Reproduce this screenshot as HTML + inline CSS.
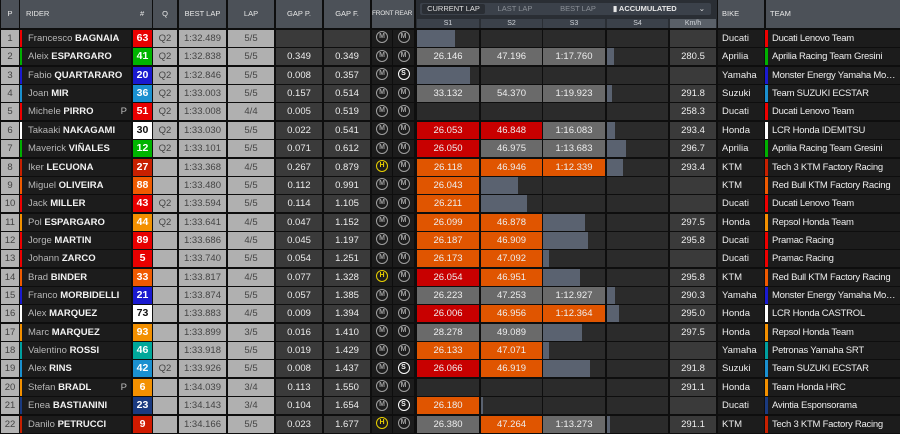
<!DOCTYPE html>
<html><head><meta charset="utf-8"><style>
*{margin:0;padding:0;box-sizing:border-box}
body{width:900px;height:433px;background:#0e0e0e;font-family:"Liberation Sans",sans-serif;overflow:hidden;position:relative}
.h{position:absolute;top:0;height:28px;background:#4c5158;color:#e8e8e8;font-size:7.5px;line-height:28px;text-align:center;white-space:nowrap}
.sh{position:absolute;top:19px;height:9px;background:#3b414a;color:#cfd3d8;font-size:7px;line-height:9px;text-align:center}
#rows{position:absolute;top:30px;left:0;width:900px}
.r{position:relative;height:17px;margin-bottom:1.36px}
.c{position:absolute;top:0;height:17px;line-height:17px;font-style:normal;text-align:center;font-size:9.5px;overflow:hidden;white-space:nowrap}
.p{left:1px;width:18px;background:#b3b3b3;color:#444}
.rd{left:20px;width:111px;background:#1c1c1c;color:#b8b8b8;text-align:left;padding-left:6px;border-left:2px solid #888}
.rd b{color:#f2f2f2}
.rd em{position:absolute;right:4px;top:0;font-style:normal;color:#bbb}
.n{left:133px;width:19px;color:#fff;font-weight:bold;font-size:10.5px}
.q{left:153px;width:24px;background:#b0b0b0;color:#444}
.bl{left:179px;width:47px;background:#b0b0b0;color:#444}
.lp{left:228px;width:46px;background:#b0b0b0;color:#444}
.gp{left:276px;width:46px;background:#3a3a3a;color:#eee}
.gf{left:324px;width:46px;background:#3a3a3a;color:#eee}
.fr{left:372px;width:20px;background:#1c1c1c}
.re{left:393px;width:21px;background:#1c1c1c}
.t{display:inline-block;width:12px;height:12px;border:1.3px solid #a0a0a0;border-radius:50%;color:#a0a0a0;font-size:7px;line-height:10px;text-align:center;font-weight:bold;vertical-align:middle;margin-top:-2px;text-decoration:none}
.t.s{border-color:#fff;color:#fff}
.t.hd{border-color:#e8d000;color:#e8d000}
.s1,.s2,.s3,.s4{background:#2b2b2b;color:#eee}
.s1{left:417px;width:62px}.s2{left:481px;width:61px}.s3{left:543px;width:62px}.s4{left:607px;width:61px}
.f{position:absolute;left:0;top:0;height:17px;width:100%;font-weight:normal}
.g{background:#6a6a6a}.x{background:#c80000}.o{background:#e05500}
.bar{position:absolute;left:0;top:0;height:17px;background:#5a6270}
.km{left:670px;width:46px;background:#3a3a3a;color:#eee}
.bk{left:718px;width:46px;background:#1c1c1c;color:#eee;text-align:left;padding-left:4px}
.tm{left:765px;width:135px;background:#1c1c1c;color:#eee;text-align:left;padding-left:4px;padding-right:3px;border-left:3px solid #888;text-overflow:ellipsis;letter-spacing:-0.25px}
</style></head><body>
<div class="h" style="left:1px;width:18px">P</div>
<div class="h" style="left:20px;width:132px;text-align:left;padding-left:6px">RIDER<span style="position:absolute;left:120px">#</span></div>
<div class="h" style="left:153px;width:24px">Q</div>
<div class="h" style="left:179px;width:47px">BEST LAP</div>
<div class="h" style="left:228px;width:46px">LAP</div>
<div class="h" style="left:276px;width:46px">GAP P.</div>
<div class="h" style="left:324px;width:46px">GAP F.</div>
<div class="h" style="left:372px;width:42px;font-size:6.5px;text-align:left;padding-left:0;letter-spacing:-0.2px">FRONT REAR</div>
<div class="h" style="left:416px;width:301px;background:#2a2e34"></div>
<div style="position:absolute;left:420px;top:3px;width:200px;height:12px;background:#3b414a;border-radius:2px"></div>
<div style="position:absolute;left:422px;top:4px;width:63px;height:10px;background:#2a2e34;border-radius:2px;color:#e0e0e0;font-size:7.5px;line-height:10px;text-align:center">CURRENT LAP</div>
<div style="position:absolute;left:490px;top:4px;width:50px;height:10px;color:#8a8f96;font-size:7.5px;line-height:10px;text-align:center">LAST LAP</div>
<div style="position:absolute;left:548px;top:4px;width:60px;height:10px;color:#8a8f96;font-size:7.5px;line-height:10px;text-align:center">BEST LAP</div>
<div style="position:absolute;left:607px;top:3px;width:104px;height:12px;background:#3b414a;border-radius:2px;color:#e8e8e8;font-size:7.5px;line-height:12px;padding-left:6px;font-weight:bold">▮ ACCUMULATED<span style="position:absolute;right:6px;font-weight:normal">⌄</span></div>
<div class="sh" style="left:417px;width:62px">S1</div>
<div class="sh" style="left:481px;width:61px">S2</div>
<div class="sh" style="left:543px;width:62px">S3</div>
<div class="sh" style="left:607px;width:61px">S4</div>
<div class="sh" style="left:670px;width:46px;background:#5a6068">Km/h</div>
<div class="h" style="left:718px;width:46px;text-align:left;padding-left:4px">BIKE</div>
<div class="h" style="left:766px;width:134px;text-align:left;padding-left:4px">TEAM</div>

<div id="rows">
<div class="r"><i class="c p">1</i><i class="c rd" style="border-color:#e00">Francesco <b>BAGNAIA</b></i><i class="c n" style="background:#e80000">63</i><i class="c q">Q2</i><i class="c bl">1:32.489</i><i class="c lp">5/5</i><i class="c gp"></i><i class="c gf"></i><i class="c fr"><u class="t">M</u></i><i class="c re"><u class="t">M</u></i><i class="c s1"><b class="bar" style="width:38px"></b></i><i class="c s2"></i><i class="c s3"></i><i class="c s4"></i><i class="c km"></i><i class="c bk">Ducati</i><i class="c tm" style="border-color:#e00">Ducati Lenovo Team</i></div>
<div class="r"><i class="c p">2</i><i class="c rd" style="border-color:#00b000">Aleix <b>ESPARGARO</b></i><i class="c n" style="background:#00b400">41</i><i class="c q">Q2</i><i class="c bl">1:32.838</i><i class="c lp">5/5</i><i class="c gp">0.349</i><i class="c gf">0.349</i><i class="c fr"><u class="t">M</u></i><i class="c re"><u class="t">M</u></i><i class="c s1"><b class="f g">26.146</b></i><i class="c s2"><b class="f g">47.196</b></i><i class="c s3"><b class="f g">1:17.760</b></i><i class="c s4"><b class="bar" style="width:7px"></b></i><i class="c km">280.5</i><i class="c bk">Aprilia</i><i class="c tm" style="border-color:#00b000">Aprilia Racing Team Gresini</i></div>
<div class="r"><i class="c p">3</i><i class="c rd" style="border-color:#1a1ad0">Fabio <b>QUARTARARO</b></i><i class="c n" style="background:#1a1ad0">20</i><i class="c q">Q2</i><i class="c bl">1:32.846</i><i class="c lp">5/5</i><i class="c gp">0.008</i><i class="c gf">0.357</i><i class="c fr"><u class="t">M</u></i><i class="c re"><u class="t s">S</u></i><i class="c s1"><b class="bar" style="width:53px"></b></i><i class="c s2"></i><i class="c s3"></i><i class="c s4"></i><i class="c km"></i><i class="c bk">Yamaha</i><i class="c tm" style="border-color:#1a1ad0">Monster Energy Yamaha MotoGP</i></div>
<div class="r"><i class="c p">4</i><i class="c rd" style="border-color:#1a90d0">Joan <b>MIR</b></i><i class="c n" style="background:#1a90d0">36</i><i class="c q">Q2</i><i class="c bl">1:33.003</i><i class="c lp">5/5</i><i class="c gp">0.157</i><i class="c gf">0.514</i><i class="c fr"><u class="t">M</u></i><i class="c re"><u class="t">M</u></i><i class="c s1"><b class="f g">33.132</b></i><i class="c s2"><b class="f g">54.370</b></i><i class="c s3"><b class="f g">1:19.923</b></i><i class="c s4"><b class="bar" style="width:5px"></b></i><i class="c km">291.8</i><i class="c bk">Suzuki</i><i class="c tm" style="border-color:#1a90d0">Team SUZUKI ECSTAR</i></div>
<div class="r"><i class="c p">5</i><i class="c rd" style="border-color:#e00">Michele <b>PIRRO</b><em>P</em></i><i class="c n" style="background:#e80000">51</i><i class="c q">Q2</i><i class="c bl">1:33.008</i><i class="c lp">4/4</i><i class="c gp">0.005</i><i class="c gf">0.519</i><i class="c fr"><u class="t">M</u></i><i class="c re"><u class="t">M</u></i><i class="c s1"></i><i class="c s2"></i><i class="c s3"></i><i class="c s4"></i><i class="c km">258.3</i><i class="c bk">Ducati</i><i class="c tm" style="border-color:#e00">Ducati Lenovo Team</i></div>
<div class="r"><i class="c p">6</i><i class="c rd" style="border-color:#fff">Takaaki <b>NAKAGAMI</b></i><i class="c n" style="background:#fff;color:#111">30</i><i class="c q">Q2</i><i class="c bl">1:33.030</i><i class="c lp">5/5</i><i class="c gp">0.022</i><i class="c gf">0.541</i><i class="c fr"><u class="t">M</u></i><i class="c re"><u class="t">M</u></i><i class="c s1"><b class="f x">26.053</b></i><i class="c s2"><b class="f x">46.848</b></i><i class="c s3"><b class="f g">1:16.083</b></i><i class="c s4"><b class="bar" style="width:8px"></b></i><i class="c km">293.4</i><i class="c bk">Honda</i><i class="c tm" style="border-color:#fff">LCR Honda IDEMITSU</i></div>
<div class="r"><i class="c p">7</i><i class="c rd" style="border-color:#00b000">Maverick <b>VIÑALES</b></i><i class="c n" style="background:#00b400">12</i><i class="c q">Q2</i><i class="c bl">1:33.101</i><i class="c lp">5/5</i><i class="c gp">0.071</i><i class="c gf">0.612</i><i class="c fr"><u class="t">M</u></i><i class="c re"><u class="t">M</u></i><i class="c s1"><b class="f x">26.050</b></i><i class="c s2"><b class="f g">46.975</b></i><i class="c s3"><b class="f g">1:13.683</b></i><i class="c s4"><b class="bar" style="width:19px"></b></i><i class="c km">296.7</i><i class="c bk">Aprilia</i><i class="c tm" style="border-color:#00b000">Aprilia Racing Team Gresini</i></div>
<div class="r"><i class="c p">8</i><i class="c rd" style="border-color:#c82000">Iker <b>LECUONA</b></i><i class="c n" style="background:#c82000">27</i><i class="c q"></i><i class="c bl">1:33.368</i><i class="c lp">4/5</i><i class="c gp">0.267</i><i class="c gf">0.879</i><i class="c fr"><u class="t hd">H</u></i><i class="c re"><u class="t">M</u></i><i class="c s1"><b class="f o">26.118</b></i><i class="c s2"><b class="f o">46.946</b></i><i class="c s3"><b class="f o">1:12.339</b></i><i class="c s4"><b class="bar" style="width:16px"></b></i><i class="c km">293.4</i><i class="c bk">KTM</i><i class="c tm" style="border-color:#c82000">Tech 3 KTM Factory Racing</i></div>
<div class="r"><i class="c p">9</i><i class="c rd" style="border-color:#f05a00">Miguel <b>OLIVEIRA</b></i><i class="c n" style="background:#f05a00">88</i><i class="c q"></i><i class="c bl">1:33.480</i><i class="c lp">5/5</i><i class="c gp">0.112</i><i class="c gf">0.991</i><i class="c fr"><u class="t">M</u></i><i class="c re"><u class="t">M</u></i><i class="c s1"><b class="f o">26.043</b></i><i class="c s2"><b class="bar" style="width:37px"></b></i><i class="c s3"></i><i class="c s4"></i><i class="c km"></i><i class="c bk">KTM</i><i class="c tm" style="border-color:#f05a00">Red Bull KTM Factory Racing</i></div>
<div class="r"><i class="c p">10</i><i class="c rd" style="border-color:#e00">Jack <b>MILLER</b></i><i class="c n" style="background:#e80000">43</i><i class="c q">Q2</i><i class="c bl">1:33.594</i><i class="c lp">5/5</i><i class="c gp">0.114</i><i class="c gf">1.105</i><i class="c fr"><u class="t">M</u></i><i class="c re"><u class="t">M</u></i><i class="c s1"><b class="f o">26.211</b></i><i class="c s2"><b class="bar" style="width:46px"></b></i><i class="c s3"></i><i class="c s4"></i><i class="c km"></i><i class="c bk">Ducati</i><i class="c tm" style="border-color:#e00">Ducati Lenovo Team</i></div>
<div class="r"><i class="c p">11</i><i class="c rd" style="border-color:#f39000">Pol <b>ESPARGARO</b></i><i class="c n" style="background:#f39000">44</i><i class="c q">Q2</i><i class="c bl">1:33.641</i><i class="c lp">4/5</i><i class="c gp">0.047</i><i class="c gf">1.152</i><i class="c fr"><u class="t">M</u></i><i class="c re"><u class="t">M</u></i><i class="c s1"><b class="f o">26.099</b></i><i class="c s2"><b class="f o">46.878</b></i><i class="c s3"><b class="bar" style="width:42px"></b></i><i class="c s4"></i><i class="c km">297.5</i><i class="c bk">Honda</i><i class="c tm" style="border-color:#f39000">Repsol Honda Team</i></div>
<div class="r"><i class="c p">12</i><i class="c rd" style="border-color:#e00">Jorge <b>MARTIN</b></i><i class="c n" style="background:#e80000">89</i><i class="c q"></i><i class="c bl">1:33.686</i><i class="c lp">4/5</i><i class="c gp">0.045</i><i class="c gf">1.197</i><i class="c fr"><u class="t">M</u></i><i class="c re"><u class="t">M</u></i><i class="c s1"><b class="f o">26.187</b></i><i class="c s2"><b class="f o">46.909</b></i><i class="c s3"><b class="bar" style="width:45px"></b></i><i class="c s4"></i><i class="c km">295.8</i><i class="c bk">Ducati</i><i class="c tm" style="border-color:#e00">Pramac Racing</i></div>
<div class="r"><i class="c p">13</i><i class="c rd" style="border-color:#e00">Johann <b>ZARCO</b></i><i class="c n" style="background:#e80000">5</i><i class="c q"></i><i class="c bl">1:33.740</i><i class="c lp">5/5</i><i class="c gp">0.054</i><i class="c gf">1.251</i><i class="c fr"><u class="t">M</u></i><i class="c re"><u class="t">M</u></i><i class="c s1"><b class="f o">26.173</b></i><i class="c s2"><b class="f o">47.092</b></i><i class="c s3"><b class="bar" style="width:6px"></b></i><i class="c s4"></i><i class="c km"></i><i class="c bk">Ducati</i><i class="c tm" style="border-color:#e00">Pramac Racing</i></div>
<div class="r"><i class="c p">14</i><i class="c rd" style="border-color:#f05a00">Brad <b>BINDER</b></i><i class="c n" style="background:#f05a00">33</i><i class="c q"></i><i class="c bl">1:33.817</i><i class="c lp">4/5</i><i class="c gp">0.077</i><i class="c gf">1.328</i><i class="c fr"><u class="t hd">H</u></i><i class="c re"><u class="t">M</u></i><i class="c s1"><b class="f x">26.054</b></i><i class="c s2"><b class="f o">46.951</b></i><i class="c s3"><b class="bar" style="width:37px"></b></i><i class="c s4"></i><i class="c km">295.8</i><i class="c bk">KTM</i><i class="c tm" style="border-color:#f05a00">Red Bull KTM Factory Racing</i></div>
<div class="r"><i class="c p">15</i><i class="c rd" style="border-color:#1a1ad0">Franco <b>MORBIDELLI</b></i><i class="c n" style="background:#1a1ad0">21</i><i class="c q"></i><i class="c bl">1:33.874</i><i class="c lp">5/5</i><i class="c gp">0.057</i><i class="c gf">1.385</i><i class="c fr"><u class="t">M</u></i><i class="c re"><u class="t">M</u></i><i class="c s1"><b class="f g">26.223</b></i><i class="c s2"><b class="f g">47.253</b></i><i class="c s3"><b class="f g">1:12.927</b></i><i class="c s4"><b class="bar" style="width:8px"></b></i><i class="c km">290.3</i><i class="c bk">Yamaha</i><i class="c tm" style="border-color:#1a1ad0">Monster Energy Yamaha MotoGP</i></div>
<div class="r"><i class="c p">16</i><i class="c rd" style="border-color:#fff">Alex <b>MARQUEZ</b></i><i class="c n" style="background:#fff;color:#111">73</i><i class="c q"></i><i class="c bl">1:33.883</i><i class="c lp">4/5</i><i class="c gp">0.009</i><i class="c gf">1.394</i><i class="c fr"><u class="t">M</u></i><i class="c re"><u class="t">M</u></i><i class="c s1"><b class="f x">26.006</b></i><i class="c s2"><b class="f o">46.956</b></i><i class="c s3"><b class="f o">1:12.364</b></i><i class="c s4"><b class="bar" style="width:12px"></b></i><i class="c km">295.0</i><i class="c bk">Honda</i><i class="c tm" style="border-color:#fff">LCR Honda CASTROL</i></div>
<div class="r"><i class="c p">17</i><i class="c rd" style="border-color:#f39000">Marc <b>MARQUEZ</b></i><i class="c n" style="background:#f39000">93</i><i class="c q"></i><i class="c bl">1:33.899</i><i class="c lp">3/5</i><i class="c gp">0.016</i><i class="c gf">1.410</i><i class="c fr"><u class="t">M</u></i><i class="c re"><u class="t">M</u></i><i class="c s1"><b class="f g">28.278</b></i><i class="c s2"><b class="f g">49.089</b></i><i class="c s3"><b class="bar" style="width:39px"></b></i><i class="c s4"></i><i class="c km">297.5</i><i class="c bk">Honda</i><i class="c tm" style="border-color:#f39000">Repsol Honda Team</i></div>
<div class="r"><i class="c p">18</i><i class="c rd" style="border-color:#00a0a0">Valentino <b>ROSSI</b></i><i class="c n" style="background:#00a89a">46</i><i class="c q"></i><i class="c bl">1:33.918</i><i class="c lp">5/5</i><i class="c gp">0.019</i><i class="c gf">1.429</i><i class="c fr"><u class="t">M</u></i><i class="c re"><u class="t">M</u></i><i class="c s1"><b class="f o">26.133</b></i><i class="c s2"><b class="f o">47.071</b></i><i class="c s3"><b class="bar" style="width:6px"></b></i><i class="c s4"></i><i class="c km"></i><i class="c bk">Yamaha</i><i class="c tm" style="border-color:#00a0a0">Petronas Yamaha SRT</i></div>
<div class="r"><i class="c p">19</i><i class="c rd" style="border-color:#1a90d0">Alex <b>RINS</b></i><i class="c n" style="background:#1a90d0">42</i><i class="c q">Q2</i><i class="c bl">1:33.926</i><i class="c lp">5/5</i><i class="c gp">0.008</i><i class="c gf">1.437</i><i class="c fr"><u class="t">M</u></i><i class="c re"><u class="t s">S</u></i><i class="c s1"><b class="f x">26.066</b></i><i class="c s2"><b class="f o">46.919</b></i><i class="c s3"><b class="bar" style="width:47px"></b></i><i class="c s4"></i><i class="c km">291.8</i><i class="c bk">Suzuki</i><i class="c tm" style="border-color:#1a90d0">Team SUZUKI ECSTAR</i></div>
<div class="r"><i class="c p">20</i><i class="c rd" style="border-color:#f39000">Stefan <b>BRADL</b><em>P</em></i><i class="c n" style="background:#f39000">6</i><i class="c q"></i><i class="c bl">1:34.039</i><i class="c lp">3/4</i><i class="c gp">0.113</i><i class="c gf">1.550</i><i class="c fr"><u class="t">M</u></i><i class="c re"><u class="t">M</u></i><i class="c s1"></i><i class="c s2"></i><i class="c s3"></i><i class="c s4"></i><i class="c km">291.1</i><i class="c bk">Honda</i><i class="c tm" style="border-color:#f39000">Team Honda HRC</i></div>
<div class="r"><i class="c p">21</i><i class="c rd" style="border-color:#1a3a80">Enea <b>BASTIANINI</b></i><i class="c n" style="background:#1a3a80">23</i><i class="c q"></i><i class="c bl">1:34.143</i><i class="c lp">3/4</i><i class="c gp">0.104</i><i class="c gf">1.654</i><i class="c fr"><u class="t">M</u></i><i class="c re"><u class="t s">S</u></i><i class="c s1"><b class="f o">26.180</b></i><i class="c s2"><b class="bar" style="width:2px"></b></i><i class="c s3"></i><i class="c s4"></i><i class="c km"></i><i class="c bk">Ducati</i><i class="c tm" style="border-color:#1a3a80">Avintia Esponsorama</i></div>
<div class="r"><i class="c p">22</i><i class="c rd" style="border-color:#c82000">Danilo <b>PETRUCCI</b></i><i class="c n" style="background:#d01a00">9</i><i class="c q"></i><i class="c bl">1:34.166</i><i class="c lp">5/5</i><i class="c gp">0.023</i><i class="c gf">1.677</i><i class="c fr"><u class="t hd">H</u></i><i class="c re"><u class="t">M</u></i><i class="c s1"><b class="f g">26.380</b></i><i class="c s2"><b class="f o">47.264</b></i><i class="c s3"><b class="f g">1:13.273</b></i><i class="c s4"><b class="bar" style="width:3px"></b></i><i class="c km">291.1</i><i class="c bk">KTM</i><i class="c tm" style="border-color:#c82000">Tech 3 KTM Factory Racing</i></div>
</div>
</body></html>
